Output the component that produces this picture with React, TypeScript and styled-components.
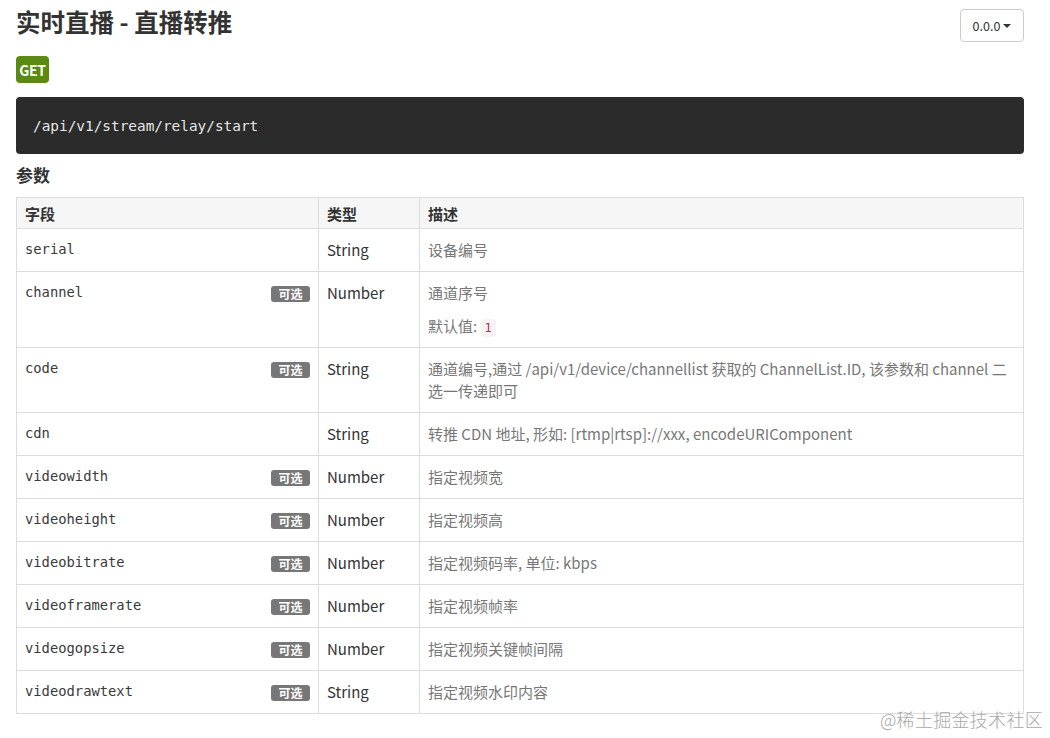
import React from "react";
import styled, { createGlobalStyle } from "styled-components";

const Global = createGlobalStyle`
  html, body { margin: 0; padding: 0; background: #fff; }
  body { font-family: "Noto Sans CJK SC", "Noto Sans", sans-serif; color: #333; }
  * { box-sizing: border-box; }
`;

const Page = styled.div`
  position: relative;
  width: 1050px;
  height: 738px;
  padding: 0 26px 0 16px;
  overflow: hidden;
`;

const Header = styled.div`
  display: flex;
  justify-content: space-between;
  align-items: flex-start;
  padding-top: 4px;
`;

const Title = styled.h1`
  margin: 0;
  font-size: 24.5px;
  font-weight: 700;
  line-height: 36px;
  color: #333;
`;

const VersionButton = styled.button`
  margin-top: 5px;
  width: 64px;
  height: 33px;
  border: 1px solid #ccc;
  border-radius: 4px;
  background: #fff;
  font-family: "Noto Sans CJK SC", "Noto Sans", sans-serif;
  font-size: 12.5px;
  color: #333;
  display: flex;
  align-items: center;
  justify-content: center;
  gap: 3px;
  padding: 0;
`;

const Caret = styled.span`
  width: 0;
  height: 0;
  border-left: 4px solid transparent;
  border-right: 4px solid transparent;
  border-top: 4px solid #333;
  margin-top: 1px;
`;

const MethodBadge = styled.div`
  display: flex;
  align-items: center;
  justify-content: center;
  margin-top: 14px;
  width: 33px;
  height: 27px;
  border-radius: 4px;
  background: #5a8a12;
  color: #fff;
  font-weight: 700;
  font-size: 14px;
  letter-spacing: -0.3px;
`;

const CodeBlock = styled.pre`
  margin: 14px 0 0;
  height: 57px;
  background: #2b2b2b;
  border-radius: 4px;
  color: #e6e6e6;
  font-family: "DejaVu Sans Mono", monospace;
  font-size: 14.4px;
  display: flex;
  align-items: center;
  padding: 0 17px;
`;

const SectionTitle = styled.h3`
  margin: 7px 0 0;
  font-size: 17px;
  font-weight: 700;
  line-height: 28px;
  color: #333;
`;

const Table = styled.table`
  margin-top: 8px;
  width: 1008px;
  border-collapse: collapse;
  table-layout: fixed;
`;

const HeadCell = styled.th<{ $w?: number }>`
  ${(p) => (p.$w ? `width: ${p.$w}px;` : "")}
  text-align: left;
  background: #f6f6f6;
  border: 1px solid #ddd;
  padding: 5px 8px 4px;
  font-size: 15px;
  font-weight: 700;
  line-height: 21px;
  color: #333;
`;

const Cell = styled.td`
  border: 1px solid #ddd;
  padding: 10px 8px;
  vertical-align: top;
  font-size: 15px;
  line-height: 22px;
`;

const FieldCell = styled(Cell)`
  font-family: "DejaVu Sans Mono", monospace;
  font-size: 13.8px;
  color: #3a3a3a;
  line-height: 20px;
`;

const FieldRow = styled.div`
  display: flex;
  justify-content: space-between;
  align-items: flex-start;
`;

const OptionalBadge = styled.span`
  margin-top: 4px;
  display: inline-flex;
  align-items: center;
  justify-content: center;
  width: 39px;
  height: 16px;
  border-radius: 3px;
  background: #777;
  color: #fff;
  font-family: "Noto Sans CJK SC", sans-serif;
  font-size: 12px;
  font-weight: 700;
  line-height: 16px;
`;

const TypeCell = styled(Cell)`
  color: #333;
`;

const DescCell = styled(Cell)`
  color: #777;
`;

const Para = styled.p`
  margin: 0;
  & + & { margin-top: 11px; }
`;

const InlineCode = styled.code`
  font-family: "DejaVu Sans Mono", monospace;
  font-size: 12px;
  line-height: 1;
  color: #c7254e;
  background: #f9f2f4;
  padding: 2px 4px;
  border-radius: 3px;
`;

const Watermark = styled.div`
  position: absolute;
  right: 7px;
  bottom: 6px;
  font-family: "Noto Sans CJK SC", sans-serif;
  font-size: 18px;
  font-weight: 300;
  color: #a8a8a8;
  letter-spacing: 0.3px;
`;

type Row = {
  name: string;
  optional?: boolean;
  type: string;
  desc: string[];
  def?: string;
};

const rows: Row[] = [
  { name: "serial", type: "String", desc: ["设备编号"] },
  { name: "channel", optional: true, type: "Number", desc: ["通道序号"], def: "1" },
  {
    name: "code",
    optional: true,
    type: "String",
    desc: [
      "通道编号,通过 /api/v1/device/channellist 获取的 ChannelList.ID, 该参数和 channel 二选一传递即可",
    ],
  },
  { name: "cdn", type: "String", desc: ["转推 CDN 地址, 形如: [rtmp|rtsp]://xxx, encodeURIComponent"] },
  { name: "videowidth", optional: true, type: "Number", desc: ["指定视频宽"] },
  { name: "videoheight", optional: true, type: "Number", desc: ["指定视频高"] },
  { name: "videobitrate", optional: true, type: "Number", desc: ["指定视频码率, 单位: kbps"] },
  { name: "videoframerate", optional: true, type: "Number", desc: ["指定视频帧率"] },
  { name: "videogopsize", optional: true, type: "Number", desc: ["指定视频关键帧间隔"] },
  { name: "videodrawtext", optional: true, type: "String", desc: ["指定视频水印内容"] },
];

export default function App() {
  return (
    <Page>
      <Global />
      <Header>
        <Title>实时直播 - 直播转推</Title>
        <VersionButton>
          0.0.0 <Caret />
        </VersionButton>
      </Header>
      <MethodBadge>GET</MethodBadge>
      <CodeBlock>/api/v1/stream/relay/start</CodeBlock>
      <SectionTitle>参数</SectionTitle>
      <Table>
        <thead>
          <tr>
            <HeadCell $w={302}>字段</HeadCell>
            <HeadCell $w={101}>类型</HeadCell>
            <HeadCell>描述</HeadCell>
          </tr>
        </thead>
        <tbody>
          {rows.map((r) => (
            <tr key={r.name}>
              <FieldCell>
                <FieldRow>
                  <span>{r.name}</span>
                  {r.optional && <OptionalBadge>可选</OptionalBadge>}
                </FieldRow>
              </FieldCell>
              <TypeCell>{r.type}</TypeCell>
              <DescCell>
                {r.desc.map((d) => (
                  <Para key={d}>{d}</Para>
                ))}
                {r.def && (
                  <Para>
                    默认值: <InlineCode>{r.def}</InlineCode>
                  </Para>
                )}
              </DescCell>
            </tr>
          ))}
        </tbody>
      </Table>
      <Watermark>@稀土掘金技术社区</Watermark>
    </Page>
  );
}
